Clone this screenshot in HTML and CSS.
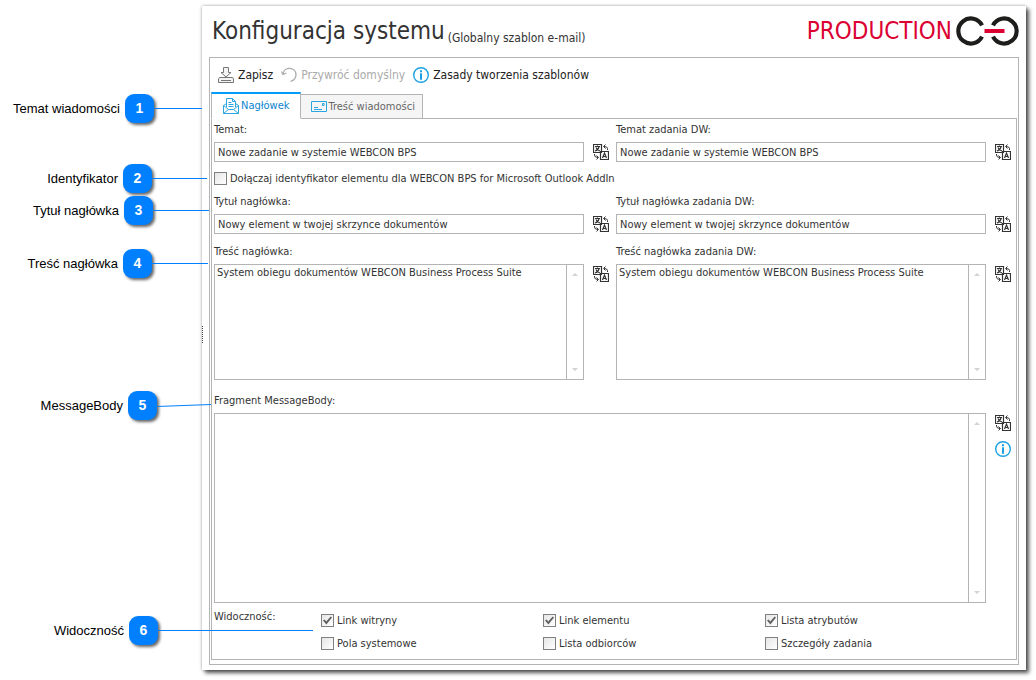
FILE: index.html
```html
<!DOCTYPE html>
<html lang="pl">
<head>
<meta charset="utf-8">
<title>Konfiguracja systemu</title>
<link rel="stylesheet" href="styles.css">
</head>
<body>
<svg class="sprite" aria-hidden="true">
  <symbol id="translate" viewBox="0 0 16 16">
    <g fill="none" stroke="#333">
      <path d="M.5.5h8v8h-8zM7.5 7.500h8v8h-8z" fill="#fff" stroke-width="1.200"/>
      <path d="M2 2.500h5M4.500 1.500v1M6 3C5.500 5 4 6.500 2 7M3 3.500C3.500 5 5 6.500 7 7" stroke-width="1.200"/>
      <path d="M9.500 14l2-5 2 5M10 12.500h3" stroke-width="1.200"/>
      <path d="M14.500 6V4.500Q14.500 2.500 11 2.500M12.500.5l-2 2 2 2M1.500 10v1Q1.500 13.500 5 13.500M3.500 11.500l2 2-2 2"/>
    </g>
  </symbol>
  <symbol id="info" viewBox="0 0 16 16">
    <circle cx="8" cy="8" r="7.300" fill="none" stroke="#1ba1e2" stroke-width="1.400"/>
    <path d="M7 3.200h2v2H7zM7 6.300h2v6.500H7z" fill="#1ba1e2"/>
  </symbol>
</svg>

<main class="window">
  <header class="titlebar">
    <h1 class="title">Konfiguracja systemu</h1>
    <span class="subtitle">(Globalny szablon e-mail)</span>
    <span class="brand">PRODUCTION</span>
    <svg class="logo" viewBox="0 0 63 30" aria-hidden="true">
      <g fill="none" stroke="#1d1d1b" stroke-width="4.200">
        <path d="M26 9.400A12.500 12.500 0 1 0 26 20.600"/>
        <path d="M37 9.400A12.500 12.500 0 1 1 37 20.600"/>
      </g>
      <path d="M28.500 13h20v4h-20z" fill="#dc0032"/>
    </svg>
  </header>

  <section class="frame">
    <div class="toolbar">
      <button class="tool" type="button">
        <svg viewBox="0 0 16 16" aria-hidden="true"><g fill="#f3f3f3" stroke="#777"><path d="M1.500 10.500h13l1 1.500v3.500H.5V12z"/><path d="M5.500.500h5v5H13L8 10 3 5.500h2.500z"/><path d="M3 13.500h10"/></g></svg>
        Zapisz
      </button>
      <button class="tool" type="button" disabled>
        <svg viewBox="0 0 16 16" aria-hidden="true"><path d="M2 7C3-.5 14.500-.5 15 7.500c0 4-2.500 6-5.500 7M.5 4.500l1.500 3 3.500-1.500" fill="none" stroke="#aaa" stroke-width="1.300"/></svg>
        Przywróć domyślny
      </button>
      <button class="tool" type="button">
        <svg aria-hidden="true"><use href="#info"/></svg>
        Zasady tworzenia szablonów
      </button>
    </div>

    <div class="tabs" role="tablist">
      <button class="tab tab-active" type="button" role="tab" aria-selected="true">
        <svg viewBox="0 0 16 16" aria-hidden="true"><g fill="none" stroke="#2ba6e0"><path d="M3.500 9V.5h6l3 3V9M9.500.5v3h3M5.500 4.500h3M5.500 6.500h5M5.500 8.500h5M3.500 5.500L.5 7.500v8h15v-8l-3-2M.5 7.500l5 4h5l5-4M.5 15.500l5-4M15.500 15.500l-5-4"/></g></svg>
        Nagłówek
      </button>
      <button class="tab" type="button" role="tab" aria-selected="false">
        <svg viewBox="0 0 16 16" aria-hidden="true"><g fill="none" stroke="#2ba6e0"><path d="M.5 2.500h15v10H.5zM3 8.500h4M3 10.500h8"/><path d="M11.500 4.500h1.500v2h-1.500z"/></g></svg>
        Treść wiadomości
      </button>
    </div>

    <div class="panel" role="tabpanel">
      <div class="pair">
        <div class="field">
          <label for="subject">Temat:</label>
          <div class="control"><input id="subject" class="text" type="text" value="Nowe zadanie w systemie WEBCON BPS"><button class="icon" type="button" aria-label="Tłumaczenia"><svg><use href="#translate"/></svg></button></div>
        </div>
        <div class="field">
          <label for="subject-cc">Temat zadania DW:</label>
          <div class="control"><input id="subject-cc" class="text" type="text" value="Nowe zadanie w systemie WEBCON BPS"><button class="icon" type="button" aria-label="Tłumaczenia"><svg><use href="#translate"/></svg></button></div>
        </div>
      </div>

      <label class="check check-outlook"><input type="checkbox">Dołączaj identyfikator elementu dla WEBCON BPS for Microsoft Outlook AddIn</label>

      <div class="pair">
        <div class="field">
          <label for="heading">Tytuł nagłówka:</label>
          <div class="control"><input id="heading" class="text" type="text" value="Nowy element w twojej skrzynce dokumentów"><button class="icon" type="button" aria-label="Tłumaczenia"><svg><use href="#translate"/></svg></button></div>
        </div>
        <div class="field">
          <label for="heading-cc">Tytuł nagłówka zadania DW:</label>
          <div class="control"><input id="heading-cc" class="text" type="text" value="Nowy element w twojej skrzynce dokumentów"><button class="icon" type="button" aria-label="Tłumaczenia"><svg><use href="#translate"/></svg></button></div>
        </div>
      </div>

      <div class="pair pair-memo">
        <div class="field">
          <label for="content">Treść nagłówka:</label>
          <div class="control">
            <div class="memo"><textarea id="content">System obiegu dokumentów WEBCON Business Process Suite</textarea><div class="scroll"><i class="up"></i><i class="down"></i></div></div>
            <button class="icon" type="button" aria-label="Tłumaczenia"><svg><use href="#translate"/></svg></button>
          </div>
        </div>
        <div class="field">
          <label for="content-cc">Treść nagłówka zadania DW:</label>
          <div class="control">
            <div class="memo"><textarea id="content-cc">System obiegu dokumentów WEBCON Business Process Suite</textarea><div class="scroll"><i class="up"></i><i class="down"></i></div></div>
            <button class="icon" type="button" aria-label="Tłumaczenia"><svg><use href="#translate"/></svg></button>
          </div>
        </div>
      </div>

      <div class="field field-body">
        <label for="body">Fragment MessageBody:</label>
        <div class="control">
          <div class="memo memo-tall"><textarea id="body"></textarea><div class="scroll"><i class="up"></i><i class="down"></i></div></div>
          <div class="icons">
            <button class="icon" type="button" aria-label="Tłumaczenia"><svg><use href="#translate"/></svg></button>
            <button class="icon" type="button" aria-label="Informacje"><svg><use href="#info"/></svg></button>
          </div>
        </div>
      </div>

      <fieldset class="visibility">
        <legend>Widoczność:</legend>
        <div class="options">
          <label class="check"><input type="checkbox" checked>Link witryny</label>
          <label class="check"><input type="checkbox" checked>Link elementu</label>
          <label class="check"><input type="checkbox" checked>Lista atrybutów</label>
          <label class="check"><input type="checkbox">Pola systemowe</label>
          <label class="check"><input type="checkbox">Lista odbiorców</label>
          <label class="check"><input type="checkbox">Szczegóły zadania</label>
        </div>
      </fieldset>
    </div>
  </section>
  <div class="splitter"></div>
</main>

<ol class="callouts">
  <li class="callout c1"><span class="name">Temat wiadomości</span><b class="badge">1</b><span class="line"></span></li>
  <li class="callout c2"><span class="name">Identyfikator</span><b class="badge">2</b><span class="line"></span></li>
  <li class="callout c3"><span class="name">Tytuł nagłówka</span><b class="badge">3</b><span class="line"></span></li>
  <li class="callout c4"><span class="name">Treść nagłówka</span><b class="badge">4</b><span class="line"></span></li>
  <li class="callout c5"><span class="name">MessageBody</span><b class="badge">5</b><span class="line"></span></li>
  <li class="callout c6"><span class="name">Widoczność</span><b class="badge">6</b><span class="line"></span></li>
</ol>
</body>
</html>
```
FILE: styles.css
```css
* { box-sizing: border-box; }

body {
  margin: 0;
  padding: 6px 10px 10px 202px;
  background: #fff;
  color: #333;
  font: 11px/22px "DejaVu Sans Condensed", "DejaVu Sans", sans-serif;
}

button, input, textarea {
  margin: 0;
  padding: 0;
  border: 0;
  background: none;
  color: inherit;
  font: inherit;
}

svg { display: block; flex: none; }
.sprite { position: absolute; width: 0; height: 0; }

.window {
  position: relative;
  padding: 0 7px 5px;
  background: #fff;
  box-shadow: 0 0 3px rgba(0, 0, 0, .35), 3px 3px 4px rgba(0, 0, 0, .65);
}

/* Title bar */
.titlebar {
  display: flex;
  align-items: flex-start;
  height: 51px;
  padding: 5px 0 0 3px;
  line-height: 40px;
}
.title { margin: 0; font-size: 24px; font-weight: 400; }
.subtitle { margin: 7px 0 0 3px; font-size: 12px; }
.brand { margin-left: auto; color: #dc0032; font-size: 24px; }
.logo { width: 63px; height: 30px; margin: 5px 0 0 4px; }

/* Frame and toolbar */
.frame { padding: 0 1px 4px; border: 1px solid #b4b4b4; }
.toolbar { display: flex; gap: 8px; height: 34px; padding-left: 7px; }
.tool { display: flex; align-items: center; gap: 4px; font-size: 12px; color: #222; }
.tool svg { width: 16px; height: 16px; }
.tool:disabled { color: #aaa; }

/* Tabs */
.tabs { display: flex; align-items: flex-end; margin-bottom: -1px; }
.tab {
  display: flex;
  align-items: center;
  gap: 2px;
  height: 25px;
  padding: 0 7px 0 10px;
  border: 1px solid #b4b4b4;
  border-left: 0;
  background: #f5f5f5;
  color: #666;
}
.tab svg { width: 16px; height: 16px; }
.tab-active {
  height: 27px;
  padding: 0 10px 0 11px;
  border: 1px solid #b4b4b4;
  border-top: 2px solid #009dff;
  border-bottom-color: #fff;
  background: #fff;
  color: #0a84d0;
}

/* Panel */
.panel { padding: 0 6px 9px 2px; border: 1px solid #b4b4b4; }
.pair { display: grid; grid-template-columns: 1fr 1fr; gap: 8px; }
.pair-memo { margin-top: 7px; }
.field { display: flex; flex-direction: column; gap: 1px; min-width: 0; }
.field-body { margin-top: 10px; }
.control { display: flex; gap: 9px; margin-right: -1px; }
.text {
  flex: 1;
  min-width: 0;
  height: 20px;
  padding: 1px 3px 0;
  border: 1px solid #b4b4b4;
}
.icon { display: block; align-self: flex-start; width: 16px; height: 16px; margin-top: 2px; cursor: pointer; }
.icon svg { width: 16px; height: 16px; }
.icons { display: grid; gap: 8px; align-content: start; }

.memo { display: flex; flex: 1; min-width: 0; height: 116px; border: 1px solid #b4b4b4; }
.memo-tall { height: 190px; }
.memo textarea { flex: 1; min-width: 0; padding: 0 2px; line-height: 15px; resize: none; overflow: hidden; }
.scroll {
  display: flex;
  flex-direction: column;
  justify-content: space-between;
  align-items: center;
  width: 17px;
  padding: 8px 0;
  border-left: 1px solid #b4b4b4;
}
.up, .down { border: 3px solid transparent; }
.up { border-top: 0; border-bottom-color: #d2d2d2; }
.down { border-bottom: 0; border-top-color: #d2d2d2; }

/* Check boxes */
.check { display: flex; align-items: center; gap: 3px; line-height: 13px; }
.check input {
  display: grid;
  place-items: center;
  flex: none;
  appearance: none;
  width: 13px;
  height: 13px;
  border: 1px solid #808080;
  background: linear-gradient(135deg, #e6e6e6, #fff);
}
.check input:checked::before {
  content: "";
  width: 9px;
  height: 9px;
  background: #606060;
  clip-path: polygon(0 50%, 18% 38%, 36% 62%, 85% 5%, 100% 18%, 38% 95%);
}
.check-outlook { width: fit-content; margin: 10px 0 6px; }

.visibility { display: flex; margin: 0; padding: 4px 0 0; border: 0; }
.visibility legend { float: left; width: 107px; padding: 0; line-height: 20px; }
.options { display: grid; flex: 1; grid-template-columns: repeat(3, 222px); gap: 10px 0; padding-top: 7px; }

.splitter { position: absolute; top: 320px; left: 0; height: 17px; border-left: 1px dotted #444; }

/* Numbered callouts */
.callouts { margin: 0; padding: 0; list-style: none; color: #000; font: 13px/28px "Liberation Sans", Arial, sans-serif; }
.callout { position: absolute; left: 0; display: flex; align-items: center; justify-content: flex-end; }
.name { margin-right: 5px; white-space: nowrap; }
.badge {
  flex: none;
  width: 29px;
  height: 29px;
  border-radius: 9px;
  background: #0080ff;
  box-shadow: 2px 2px 3px rgba(0, 0, 0, .6);
  color: #fff;
  font-size: 14px;
  text-align: center;
}
.line { height: 1px; background: #0080ff; }
.c1 { top: 94px; width: 202px; }
.c1 .line { width: 48px; }
.c2 { top: 164px; width: 207px; }
.c2 .line { width: 55px; }
.c3 { top: 196px; width: 209px; }
.c3 .line { width: 56px; }
.c4 { top: 249px; width: 208px; }
.c4 .line { width: 56px; }
.c5 { top: 391px; width: 211px; }
.c5 .line { width: 54px; transform: rotate(-2deg); }
.c6 { top: 616px; width: 313px; }
.c6 .line { width: 155px; }
```
